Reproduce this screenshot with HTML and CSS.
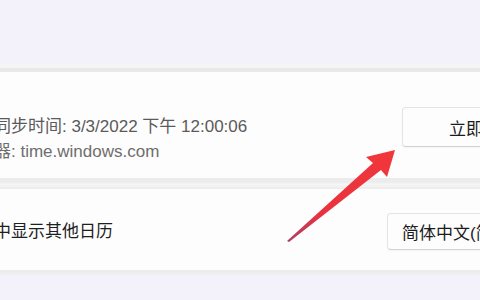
FILE: index.html
```html
<!DOCTYPE html>
<html lang="zh-CN">
<head>
    <meta charset="UTF-8">
    <meta name="viewport" content="width=device-width, initial-scale=1.0">
    <title>日期和时间</title>
    <link rel="stylesheet" href="styles.css">
</head>
<body>
    <div class="page">
        <div class="top"></div>
        <div class="top-edge"></div>

        <div class="card sync-card">
            <div class="info">
                <div class="line primary">上次成功同步时间: 3/3/2022 下午 12:00:06</div>
                <div class="line secondary">时间服务器: time.windows.com</div>
            </div>
            <button class="btn sync-btn">立即同步</button>
        </div>

        <div class="gap"></div>

        <div class="card calendar-card">
            <div class="info">
                <div class="line label">在任务栏中显示其他日历</div>
            </div>
            <button class="btn combo">简体中文(简体)</button>
        </div>

        <div class="bottom-edge"></div>

        <svg class="arrow" width="480" height="300" viewBox="0 0 480 300">
            <defs>
                <linearGradient id="arrowFill" x1="287" y1="241" x2="395" y2="150" gradientUnits="userSpaceOnUse">
                    <stop offset="0" stop-color="#a8406a"/>
                    <stop offset="0.3" stop-color="#e8323f"/>
                    <stop offset="1" stop-color="#f2373a"/>
                </linearGradient>
            </defs>
            <polygon points="287,241 373,163 366,157 395,150 387,177 381,170 289,242" fill="url(#arrowFill)"/>
        </svg>
    </div>
</body>
</html>
```

FILE: styles.css
```css
body {
    margin: 0;
    background: #f3f1fa;
    font-family: "Segoe UI", "Liberation Sans", "Noto Sans CJK SC", sans-serif;
    overflow: hidden;
}

.page {
    position: relative;
    width: 480px;
    height: 300px;
    overflow: hidden;
}

.top {
    height: 63px;
    background: #f3f1fa;
}

.top-edge {
    height: 9px;
    background: linear-gradient(#f4f3f7 0, #f5f5f6 50%, #e9e9e9 55%, #e9e9e9 100%);
}

.card {
    display: flex;
    justify-content: space-between;
    background: #fdfdfd;
    box-sizing: border-box;
}

.sync-card {
    height: 106px;
    align-items: flex-start;
    padding-top: 35px;
}

.calendar-card {
    height: 81px;
    align-items: center;
    padding-top: 3px;
}

.gap {
    height: 11px;
    background: linear-gradient(#ebebeb 0, #ededed 40%, #f6f6f6 55%, #ececec 100%);
}

.bottom-edge {
    height: 5px;
    background: linear-gradient(#ebebeb, #f0eff4);
}

.info {
    margin-left: -74px;
    font-size: 17px;
    line-height: 25px;
}

.sync-card .info {
    margin-top: 7px;
}

.primary {
    color: #5a5a5a;
}

.secondary {
    color: #6e6e6e;
}

.label {
    color: #1f1f1f;
}

.line {
    white-space: nowrap;
}

.btn {
    flex: none;
    margin-right: -84px;
    font-family: inherit;
    font-size: 17px;
    color: #1b1b1b;
    background: #fdfdfd;
    border: 1px solid #e4e4e4;
    border-bottom-color: #d2d2d2;
    border-radius: 4px;
    box-shadow: 0 1px 2px rgba(0, 0, 0, 0.04);
    white-space: nowrap;
}

.sync-btn {
    width: 162px;
    height: 40px;
    text-align: center;
}

.combo {
    width: 177px;
    height: 37px;
    text-align: left;
    padding: 0 0 0 14px;
}

.arrow {
    position: absolute;
    left: 0;
    top: 0;
}
```
